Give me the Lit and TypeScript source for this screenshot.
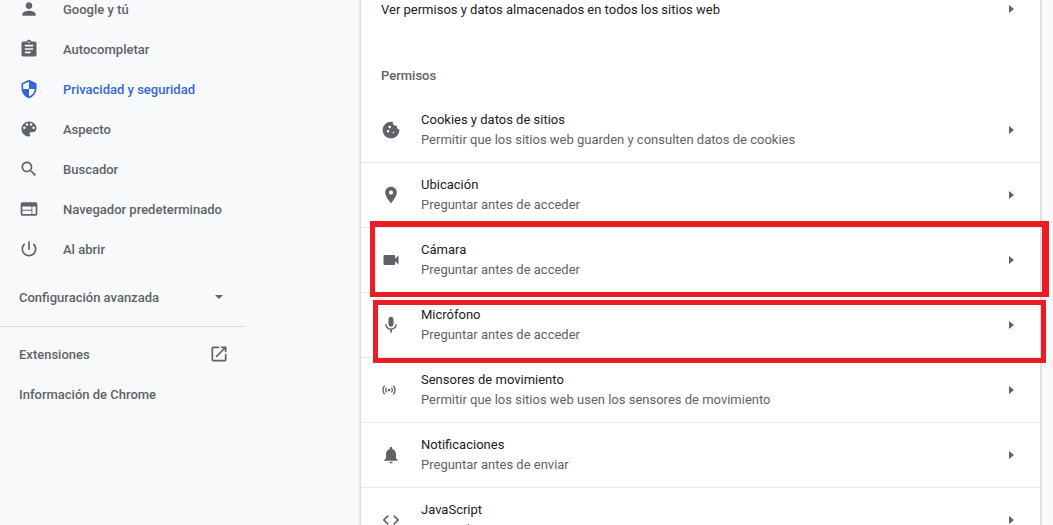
import { LitElement, html, css, svg } from "lit";
import { customElement } from "lit/decorators.js";

const P: Record<string, string> = {
  person: "M12 12c2.21 0 4-1.79 4-4s-1.79-4-4-4-4 1.79-4 4 1.79 4 4 4zm0 2c-2.67 0-8 1.34-8 4v2h16v-2c0-2.66-5.33-4-8-4z",
  assignment: "M19 3h-4.18C14.4 1.84 13.3 1 12 1c-1.3 0-2.4.84-2.82 2H5c-1.1 0-2 .9-2 2v14c0 1.1.9 2 2 2h14c1.1 0 2-.9 2-2V5c0-1.1-.9-2-2-2zm-7 0c.55 0 1 .45 1 1s-.45 1-1 1-1-.45-1-1 .45-1 1-1zm2 14H7v-2h7v2zm3-4H7v-2h10v2zm0-4H7V7h10v2z",
  security: "M12 1L3 5v6c0 5.55 3.84 10.74 9 12 5.16-1.26 9-6.45 9-12V5l-9-4zm0 10.99h7c-.53 4.12-3.28 7.79-7 8.94V12H5V6.3l7-3.11v8.8z",
  palette: "M12 3c-4.97 0-9 4.03-9 9s4.03 9 9 9c.83 0 1.5-.67 1.5-1.5 0-.39-.15-.74-.39-1.01-.23-.26-.38-.61-.38-.99 0-.83.67-1.5 1.5-1.5H16c2.76 0 5-2.24 5-5 0-4.42-4.03-8-9-8zm-5.5 9c-.83 0-1.5-.67-1.5-1.5S5.67 9 6.5 9 8 9.67 8 10.5 7.33 12 6.5 12zm3-4C8.67 8 8 7.33 8 6.5S8.67 5 9.5 5s1.5.67 1.5 1.5S10.33 8 9.5 8zm5 0c-.83 0-1.5-.67-1.5-1.5S13.67 5 14.5 5s1.5.67 1.5 1.5S15.33 8 14.5 8zm3 4c-.83 0-1.5-.67-1.5-1.5S16.67 9 17.5 9s1.5.67 1.5 1.5-.67 1.5-1.5 1.5z",
  search: "M15.5 14h-.79l-.28-.27C15.41 12.59 16 11.11 16 9.5 16 5.91 13.09 3 9.5 3S3 5.91 3 9.5 5.91 16 9.5 16c1.61 0 3.09-.59 4.23-1.57l.27.28v.79l5 4.99L20.49 19l-4.99-5zm-6 0C7.01 14 5 11.99 5 9.5S7.01 5 9.5 5 14 7.01 14 9.5 11.99 14 9.5 14z",
  web: "M20 4H4c-1.1 0-2 .9-2 2v12c0 1.1.9 2 2 2h16c1.1 0 2-.9 2-2V6c0-1.1-.9-2-2-2zM4 18v-4h11v4H4zm0-5V9h11v4H4zm16 5h-4V9h4v9z",
  power: "M13 3h-2v10h2V3zm4.83 2.17l-1.42 1.42C17.99 7.86 19 9.81 19 12c0 3.87-3.13 7-7 7s-7-3.13-7-7c0-2.19 1.01-4.14 2.58-5.42L6.17 5.17C4.23 6.82 3 9.26 3 12c0 4.97 4.03 9 9 9s9-4.03 9-9c0-2.74-1.23-5.18-3.17-6.83z",
  open: "M19 19H5V5h7V3H5c-1.11 0-2 .9-2 2v14c0 1.1.89 2 2 2h14c1.1 0 2-.9 2-2v-7h-2v7zM14 3v2h3.59l-9.83 9.83 1.41 1.41L19 6.41V10h2V3h-7z",
  cookie: "M21.95 10.99c-1.79-.03-3.7-1.95-2.68-4.22-2.98 1-5.77-1.59-5.19-4.56C6.95.71 2 6.58 2 12c0 5.52 4.48 10 10 10 5.89 0 10.54-5.08 9.95-11.01zM8.5 15c-.83 0-1.5-.67-1.5-1.5S7.67 12 8.5 12s1.5.67 1.5 1.5S9.33 15 8.5 15zm2-5C9.67 10 9 9.33 9 8.5S9.67 7 10.5 7s1.5.67 1.5 1.5-.67 1.5-1.5 1.5zm4.5 6c-.55 0-1-.45-1-1s.45-1 1-1 1 .45 1 1-.45 1-1 1z",
  place: "M12 2C8.13 2 5 5.13 5 9c0 5.25 7 13 7 13s7-7.75 7-13c0-3.87-3.13-7-7-7zm0 9.5c-1.38 0-2.5-1.12-2.5-2.5s1.12-2.5 2.5-2.5 2.5 1.12 2.5 2.5-1.12 2.5-2.5 2.5z",
  videocam: "M17 10.5V7c0-.55-.45-1-1-1H4c-.55 0-1 .45-1 1v10c0 .55.45 1 1 1h12c.55 0 1-.45 1-1v-3.5l4 4v-11l-4 4z",
  mic: "M12 14c1.66 0 2.99-1.34 2.99-3L15 5c0-1.66-1.34-3-3-3S9 3.34 9 5v6c0 1.66 1.34 3 3 3zm5.3-3c0 3-2.54 5.1-5.3 5.1S6.7 14 6.7 11H5c0 3.41 2.72 6.23 6 6.72V21h2v-3.28c3.28-.48 6-3.3 6-6.72h-1.7z",
  sensors: "M7.76 16.24C6.67 15.16 6 13.66 6 12s.67-3.16 1.76-4.24l1.42 1.42C8.45 9.9 8 10.9 8 12c0 1.1.45 2.1 1.17 2.83l-1.41 1.41zm8.48 0C17.33 15.16 18 13.66 18 12s-.67-3.16-1.76-4.24l-1.42 1.42C15.55 9.9 16 10.9 16 12c0 1.1-.45 2.1-1.17 2.83l1.41 1.41zM12 10c-1.1 0-2 .9-2 2s.9 2 2 2 2-.9 2-2-.9-2-2-2zm8 2c0 2.21-.9 4.21-2.35 5.65l1.42 1.42C20.88 17.26 22 14.76 22 12s-1.12-5.26-2.93-7.07l-1.42 1.42C19.1 7.79 20 9.79 20 12zM6.35 6.35L4.93 4.93C3.12 6.74 2 9.24 2 12s1.12 5.26 2.93 7.07l1.42-1.42C4.9 16.21 4 14.21 4 12s.9-4.21 2.35-5.65z",
  bell: "M12 22c1.1 0 2-.9 2-2h-4c0 1.1.89 2 2 2zm6-6v-5c0-3.07-1.64-5.64-4.5-6.32V4c0-.83-.67-1.5-1.5-1.5s-1.5.67-1.5 1.5v.68C7.63 5.36 6 7.92 6 11v5l-2 2v1h16v-1l-2-2z",
  code: "M9.4 16.6L4.8 12l4.6-4.6L8 6l-6 6 6 6 1.4-1.4zm5.2 0l4.6-4.6-4.6-4.6L16 6l6 6-6 6-1.4-1.4z",
};

const icon = (name: string) =>
  html`<svg class="ic ${name === "sensors" ? "small" : ""}" viewBox="0 0 24 24" aria-hidden="true">${svg`<path d=${P[name]}></path>`}</svg>`;

const arrow = html`<svg class="arrow" viewBox="0 0 6 8" aria-hidden="true">${svg`<path d="M0 0l5 4-5 4z"></path>`}</svg>`;

const NAV = [
  ["person", "Google y tú"],
  ["assignment", "Autocompletar"],
  ["security", "Privacidad y seguridad"],
  ["palette", "Aspecto"],
  ["search", "Buscador"],
  ["web", "Navegador predeterminado"],
  ["power", "Al abrir"],
];

const ROWS = [
  ["cookie", "Cookies y datos de sitios", "Permitir que los sitios web guarden y consulten datos de cookies"],
  ["place", "Ubicación", "Preguntar antes de acceder"],
  ["videocam", "Cámara", "Preguntar antes de acceder"],
  ["mic", "Micrófono", "Preguntar antes de acceder"],
  ["sensors", "Sensores de movimiento", "Permitir que los sitios web usen los sensores de movimiento"],
  ["bell", "Notificaciones", "Preguntar antes de enviar"],
  ["code", "JavaScript", "Permitido"],
];

@customElement("app-root")
export class AppRoot extends LitElement {
  static styles = css`
    :host {
      display: block;
      position: relative;
      width: 1053px;
      height: 525px;
      overflow: hidden;
      background: #f8f9fa;
      font-family: Roboto, "Liberation Sans", sans-serif;
      font-size: 13px;
      color: #5f6368;
    }
    .page {
      display: flex;
      height: 100%;
      align-items: flex-start;
    }
    .side {
      width: 245px;
      flex: none;
      margin-top: -11px;
      font-weight: 500;
    }
    .nav {
      display: flex;
      align-items: center;
      height: 40px;
      gap: 24px;
      padding-left: 19px;
    }
    .nav.active {
      color: #3367d6;
    }
    .ic {
      width: 20px;
      height: 20px;
      flex: none;
      fill: #5f6368;
    }
    .nav.active .ic {
      fill: #3367d6;
    }
    .link {
      display: flex;
      align-items: center;
      justify-content: space-between;
      height: 40px;
      padding: 0 16px 0 19px;
    }
    .caret {
      width: 0;
      height: 0;
      margin-right: 6px;
      border-left: 4px solid transparent;
      border-right: 4px solid transparent;
      border-top: 4px solid #5f6368;
    }
    .adv {
      margin-top: 8px;
      padding-bottom: 9px;
      border-bottom: 1px solid #dadce0;
      margin-bottom: 7px;
      box-sizing: content-box;
    }
    .card {
      box-sizing: border-box;
      width: 681px;
      margin-left: 115px;
      margin-top: -11px;
      height: 560px;
      flex: none;
      background: #fff;
      border-left: 1px solid #dadce0;
      border-right: 1px solid #dadce0;
      box-shadow: 0 0 2px rgba(60, 64, 67, 0.3);
      color: #202124;
    }
    .top {
      display: flex;
      align-items: center;
      justify-content: space-between;
      height: 40px;
      padding: 0 25px 0 20px;
    }
    .heading {
      color: #5f6368;
      font-weight: 500;
      padding: 37px 20px 0;
      height: 32px;
      line-height: 20px;
    }
    .row {
      box-sizing: border-box;
      display: flex;
      align-items: center;
      height: 65px;
      padding: 0 25px 0 20px;
      border-bottom: 1px solid #e8eaed;
    }
    .row .ic {
      margin-right: 20px;
    }
    .row .ic.small {
      width: 16px;
      height: 16px;
      margin-right: 24px;
    }
    .text {
      flex: 1;
      line-height: 20px;
    }
    .sub {
      color: #5f6368;
    }
    .arrow {
      width: 6px;
      height: 8px;
      fill: #5f6368;
      flex: none;
    }
    .mark {
      position: absolute;
      box-sizing: border-box;
      border: 5px solid #ed1c24;
      pointer-events: none;
    }
    .cam {
      left: 370px;
      top: 221px;
      width: 679px;
      height: 76px;
      border-width: 6px 7px 5px 5px;
    }
    .micb {
      left: 373px;
      top: 300px;
      width: 673px;
      height: 63px;
    }
  `;

  render() {
    return html`
      <div class="page">
        <aside class="side">
          ${NAV.map(
            ([i, t]) => html`<div class="nav ${i === "security" ? "active" : ""}">${icon(i)}<span>${t}</span></div>`
          )}
          <div class="link adv"><span>Configuración avanzada</span><i class="caret"></i></div>
          <div class="link"><span>Extensiones</span>${icon("open")}</div>
          <div class="link"><span>Información de Chrome</span></div>
        </aside>
        <main class="card">
          <div class="top"><span>Ver permisos y datos almacenados en todos los sitios web</span>${arrow}</div>
          <div class="heading">Permisos</div>
          <div class="rows">
            ${ROWS.map(
              ([i, t, s]) => html`<div class="row">
                ${icon(i)}
                <div class="text"><div>${t}</div><div class="sub">${s}</div></div>
                ${arrow}
              </div>`
            )}
          </div>
        </main>
      </div>
      <div class="mark cam"></div>
      <div class="mark micb"></div>
    `;
  }
}
